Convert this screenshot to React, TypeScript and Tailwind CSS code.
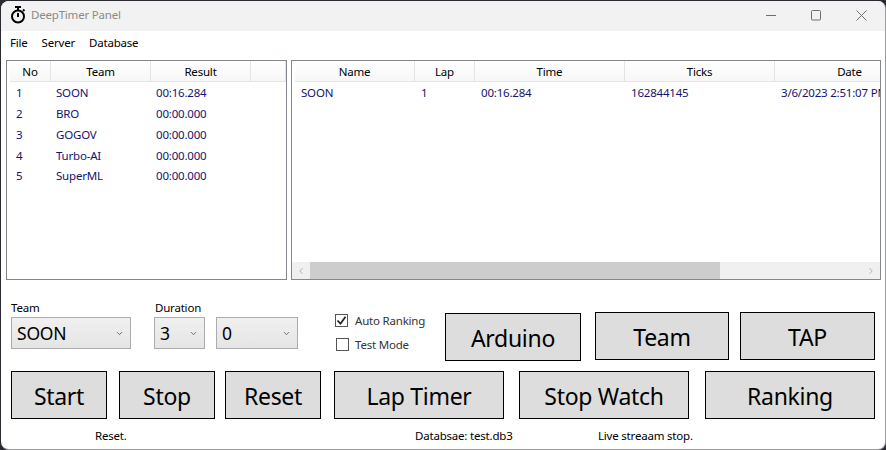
import React from 'react';
import { ChevronDown, ChevronLeft, ChevronRight } from 'lucide-react';

const leftColumns = [
  { label: 'No', width: 'w-[41px]' },
  { label: 'Team', width: 'w-[100px]' },
  { label: 'Result', width: 'w-[100px]' },
  { label: '', width: 'flex-1' },
];

const rightColumns = [
  { label: 'Name', width: 'w-[120px]' },
  { label: 'Lap', width: 'w-[60px]' },
  { label: 'Time', width: 'w-[150px]' },
  { label: 'Ticks', width: 'w-[150px]' },
  { label: 'Date', width: 'w-[150px]' },
];

const teams = [
  ['1', 'SOON', '00:16.284'],
  ['2', 'BRO', '00:00.000'],
  ['3', 'GOGOV', '00:00.000'],
  ['4', 'Turbo-AI', '00:00.000'],
  ['5', 'SuperML', '00:00.000'],
];

const laps = [['SOON', '1', '00:16.284', '162844145', '3/6/2023 2:51:07 PM']];

const Stopwatch = () => (
  <svg width="16" height="18" viewBox="0 0 16 18" fill="none" stroke="#000" strokeWidth="2">
    <circle cx="8" cy="10.5" r="6" />
    <path d="M5 1h6M8 1v3M8 7v4M13 3.5l1.5 1.5" />
  </svg>
);

const HeaderRow = ({ columns }: { columns: { label: string; width: string }[] }) => (
  <div className="flex h-[21px] shrink-0 border-b border-[#e5e5e5] bg-gradient-to-b from-white to-[#f7f7f7]">
    {columns.map((c, i) => (
      <div key={i} className={`${c.width} shrink-0 flex items-center justify-center pt-[1px] border-r border-[#e3e3e3] text-black`}>
        {c.label}
      </div>
    ))}
  </div>
);

const Select = ({ value, width }: { value: string; width: string }) => (
  <div className={`${width} h-[32px] flex items-center justify-between pl-[5px] pr-[6px] border border-[#acacac] bg-gradient-to-b from-[#f0f0f0] to-[#e5e5e5] text-[17.5px] tracking-[-0.2px] text-black`}>
    <span>{value}</span>
    <ChevronDown size={9} strokeWidth={2} className="text-[#444]" />
  </div>
);

const Btn = ({ label, className }: { label: string; className: string }) => (
  <button className={`${className} h-[48px] shrink-0 pt-[2px] border border-black bg-[#dddddd] text-[23px] tracking-[-0.3px] text-black`}>{label}</button>
);

export default function App() {
  return (
    <div className="w-[886px] h-[450px] overflow-hidden bg-[#2b2a33] pl-[1px] pt-[1px] text-[11.5px] tracking-[-0.2px] font-['Noto_Sans','Open_Sans',sans-serif]">
      <div className="h-[449px] w-[885px] flex flex-col rounded-lg overflow-hidden bg-white border-r border-b border-[#9a9a9a]">
        {/* title bar */}
        <div className="h-[30px] shrink-0 flex items-center bg-[#f2f2f2] pl-[9px] pb-[2px]">
          <Stopwatch />
          <span className="ml-[5px] text-[#8a8a8a]">DeepTimer Panel</span>
          <div className="ml-auto flex items-center gap-[35px] pr-[18px]">
            <svg width="10" height="11" viewBox="0 0 10 11" stroke="#6e6e6e" fill="none">
              <path d="M0 5.5h10" />
            </svg>
            <svg width="10" height="11" viewBox="0 0 10 11" stroke="#6e6e6e" fill="none">
              <rect x="0.5" y="0.5" width="9" height="9.5" rx="1" />
            </svg>
            <svg width="11" height="11" viewBox="0 0 11 11" stroke="#6e6e6e" fill="none">
              <path d="M0.5 0.5l10 10M10.5 0.5l-10 10" />
            </svg>
          </div>
        </div>

        {/* menu */}
        <div className="h-[29px] shrink-0 flex items-center gap-[14px] pl-[9px] pb-[6px] text-black">
          <span>File</span>
          <span>Server</span>
          <span>Database</span>
        </div>

        {/* list views */}
        <div className="h-[220px] shrink-0 flex gap-[4px] pl-[5px]">
          <div className="w-[281px] border border-[#828790] pl-[3px] flex flex-col">
            <HeaderRow columns={leftColumns} />
            <div className="pt-[0.5px] text-[#14146e]">
              {teams.map((row) => (
                <div key={row[0]} className="flex h-[20.75px] items-center">
                  <span className="w-[46px] pl-[6px] shrink-0">{row[0]}</span>
                  <span className="w-[100px] shrink-0">{row[1]}</span>
                  <span>{row[2]}</span>
                </div>
              ))}
            </div>
          </div>
          <div className="w-[590px] border border-[#828790] pl-[3px] flex flex-col overflow-hidden">
            <HeaderRow columns={rightColumns} />
            <div className="flex-1 pt-[0.5px] text-[#14146e] overflow-hidden">
              {laps.map((row) => (
                <div key={row[0]} className="flex h-[20.75px] items-center whitespace-nowrap">
                  <span className="w-[120px] shrink-0 pl-[6px]">{row[0]}</span>
                  <span className="w-[60px] shrink-0 pl-[6px]">{row[1]}</span>
                  <span className="w-[150px] shrink-0 pl-[6px]">{row[2]}</span>
                  <span className="w-[150px] shrink-0 pl-[6px]">{row[3]}</span>
                  <span className="w-[150px] shrink-0 pl-[6px]">{row[4]}</span>
                </div>
              ))}
            </div>
            <div className="-ml-[3px] h-[17px] shrink-0 flex items-center bg-[#f0f0f0] text-[#a3a3a3]">
              <ChevronLeft size={10} className="ml-[4px] shrink-0" />
              <div className="ml-[4px] w-[410px] h-full bg-[#cdcdcd]" />
              <ChevronRight size={10} className="ml-auto mr-[4px] shrink-0" />
            </div>
          </div>
        </div>

        {/* options row */}
        <div className="h-[91px] shrink-0 flex pl-[10px] pr-[10px] text-black">
          <div className="w-[143px] pt-[20px]">
            <div className="h-[17px] leading-[15px]">Team</div>
            <Select value="SOON" width="w-[120px]" />
          </div>
          <div className="w-[181px] pt-[20px]">
            <div className="h-[17px] leading-[15px] pl-[1px]">Duration</div>
            <div className="flex gap-[11px]">
              <Select value="3" width="w-[51px]" />
              <Select value="0" width="w-[82px]" />
            </div>
          </div>
          <div className="w-[110px] pt-[29px] text-[#333]">
            <label className="flex items-center gap-[7px] h-[23px]">
              <span className="w-[13px] h-[13px] flex items-center justify-center border border-[#555] bg-white">
                <svg width="11" height="11" viewBox="0 0 11 11" fill="none" stroke="#222" strokeWidth="1.8">
                  <path d="M1.5 5.5l3 3.2 5-7" />
                </svg>
              </span>
              Auto Ranking
            </label>
            <label className="flex items-center gap-[6px] h-[25px] pl-[1px]">
              <span className="w-[13px] h-[13px] border border-[#555] bg-white" />
              Test Mode
            </label>
          </div>
          <div className="pt-[33px]"><Btn label="Arduino" className="w-[136px]" /></div>
          <div className="pt-[32px] ml-[14px]"><Btn label="Team" className="w-[134px]" /></div>
          <div className="pt-[32px] ml-[11px]"><Btn label="TAP" className="w-[135px]" /></div>
        </div>

        {/* main buttons */}
        <div className="shrink-0 flex pl-[10px]">
          <Btn label="Start" className="w-[96px]" />
          <Btn label="Stop" className="w-[96px] ml-[12px]" />
          <Btn label="Reset" className="w-[96px] ml-[10px]" />
          <Btn label="Lap Timer" className="w-[170px] ml-[13px]" />
          <Btn label="Stop Watch" className="w-[170px] ml-[15px]" />
          <Btn label="Ranking" className="w-[170px] ml-[16px]" />
        </div>

        {/* status bar */}
        <div className="flex-1 flex items-center pt-[3px] text-black">
          <span className="w-[320px] pl-[94px]">Reset.</span>
          <span className="w-[183px] ml-[94px]">Databsae: test.db3</span>
          <span>Live streaam stop.</span>
        </div>
      </div>
    </div>
  );
}
